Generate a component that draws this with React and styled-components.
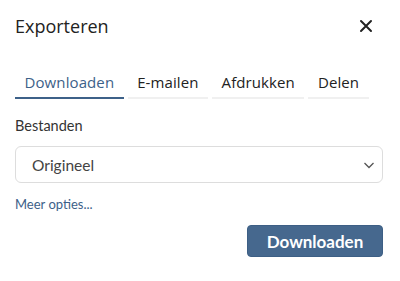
import React, { useState } from 'react'
import styled, { createGlobalStyle } from 'styled-components'

const Global = createGlobalStyle`
  html, body { margin:0; padding:0; background:#fff; }
  body { font-family: Lato, "Open Sans", sans-serif; color:#222; }
`

const Dialog = styled.div`
  width:400px;
  height:281px;
  box-sizing:border-box;
  padding:13px 17px 0 15px;
  display:flex;
  flex-direction:column;
`

const Header = styled.div`
  display:flex;
  align-items:center;
  justify-content:space-between;
  height:26px;
`

const Title = styled.h1`
  margin:0;
  font-family:"Open Sans", sans-serif;
  font-size:18px;
  font-weight:400;
  color:#222;
`

const Close = styled.button`
  border:0;
  background:transparent;
  padding:0;
  margin-right:10px;
  width:14px;
  height:14px;
  display:flex;
  cursor:pointer;
`

const Tabs = styled.div`
  display:flex;
  gap:4px;
  margin-top:27px;
`

const Tab = styled.button`
  border:0;
  background:transparent;
  font-family:"Open Sans", sans-serif;
  font-size:15px;
  letter-spacing:0.1px;
  padding:6px 9.5px 5px;
  color:${p => (p.active ? '#3d6189' : '#222')};
  border-bottom:${p => (p.active ? '2px solid #3d6189' : '2px solid #f0f0f0')};
  cursor:pointer;
`

const Label = styled.div`
  margin-top:18px;
  font-size:14.5px;
  color:#333;
`

const Select = styled.div`
  margin-top:12px;
  height:37px;
  box-sizing:border-box;
  border:1px solid #ddd;
  border-radius:6px;
  display:flex;
  align-items:center;
  justify-content:space-between;
  padding:0 6px 0 16px;
  font-size:15.5px;
  color:#444;
`

const More = styled.a`
  margin-top:13px;
  font-size:13px;
  color:#3d6189;
  text-decoration:none;
`

const Footer = styled.div`
  display:flex;
  justify-content:flex-end;
  margin-top:13px;
`

const Primary = styled.button`
  width:136px;
  height:32px;
  border:1px solid #3d5f85;
  border-radius:4px;
  background:#46688e;
  color:#fff;
  font-family:Lato, sans-serif;
  font-weight:700;
  font-size:17px;
  cursor:pointer;
`

const tabs = ['Downloaden', 'E-mailen', 'Afdrukken', 'Delen']

export default function App() {
  const [active, setActive] = useState(0)
  return (
    <Dialog>
      <Global />
      <Header>
        <Title>Exporteren</Title>
        <Close aria-label="Sluiten">
          <svg width="14" height="14" viewBox="0 0 14 14">
            <path d="M2 2 L12 12 M12 2 L2 12" stroke="#222" strokeWidth="2" strokeLinecap="round" />
          </svg>
        </Close>
      </Header>
      <Tabs>
        {tabs.map((t, i) => (
          <Tab key={t} active={i === active} onClick={() => setActive(i)}>{t}</Tab>
        ))}
      </Tabs>
      <Label>Bestanden</Label>
      <Select>
        <span>Origineel</span>
        <svg width="14" height="14" viewBox="0 0 14 14">
          <path d="M2.5 5 L7 9.5 L11.5 5" fill="none" stroke="#555" strokeWidth="1.3" />
        </svg>
      </Select>
      <More href="#">Meer opties...</More>
      <Footer>
        <Primary>Downloaden</Primary>
      </Footer>
    </Dialog>
  )
}
